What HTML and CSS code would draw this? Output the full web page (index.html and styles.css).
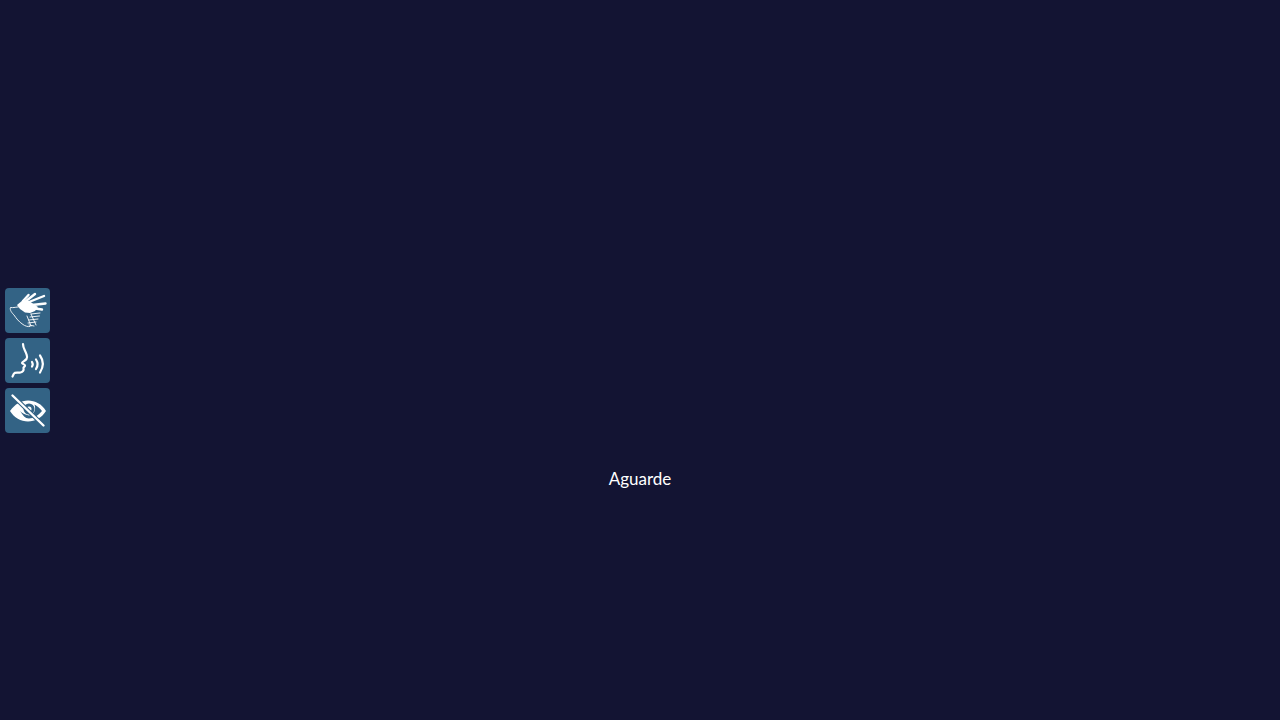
FILE: index.html
```html
<!DOCTYPE html>
<html lang="pt">
<head>
<meta charset="utf-8">
<title>Aguarde</title>
<link rel="stylesheet" href="styles.css">
</head>
<body>
<nav class="tools">
  <button class="tool" aria-label="Libras">
    <svg viewBox="0 0 45 45" class="icon">
      <path class="fill" d="M12 17 L18 12 L24 13 L33 19 L30 23 L25 25 L20 24.500 L15 21 Z"/>
      <path class="finger" d="M18 13 L23.500 7"/>
      <path class="finger" d="M21 13 L30 6"/>
      <path class="finger" d="M24 14 L39 8"/>
      <path class="finger" d="M27 17 L40.500 15.500"/>
      <path class="finger" d="M27 20 L37 21.500"/>
      <path class="thin" d="M16 18.500 C12 19 8 20 5.500 19.500 C4.500 22 7 25 9 27 C11 30 14 34 18 36.500 C20 38 23 39 25 38.500"/>
      <path class="thin" d="M26 26 L35 25 M25 29 L34.500 28 M24 32 L33 31 M23 35 L31 34 M24 37 L29 38 M22 28 L26 38 M26 26 L31 37"/>
    </svg>
  </button>
  <button class="tool" aria-label="Audio">
    <svg viewBox="0 0 45 45" class="icon">
      <path class="line" d="M18 6 C18 10 20 12 21 15 C22 18 23 19 21.500 21 C20 23 17.500 23.500 17 25 C17 26 20 26 20 27.500 C20 29 18 29 18.500 30.500 C19 32 18 34 15.500 34.500 C13 35 10 34 9 35.500 L7.500 38.500"/>
      <path class="line" d="M27 24 C28 25.500 28 27 27 28.500"/>
      <path class="line" d="M31 21.500 C33 24.500 33 28 31 31"/>
      <path class="line" d="M35 17.500 C38.500 22.500 38.500 29 35 34.500"/>
    </svg>
  </button>
  <button class="tool" aria-label="Contraste">
    <svg viewBox="0 0 45 45" class="icon">
      <path class="fill" fill-rule="evenodd" d="M5 23 C10 16 16 12.500 23 12.500 C30 12.500 37 16 41 23 C37 29.500 30 33.500 23 33.500 C16 33.500 9 29.500 5 23 Z M15 23 C18 27.500 20 30.500 24 30.500 C28.500 30.500 33.500 27.500 37 23 C35 20 32 18 29.500 16.500 C31 21 30 26 24 27.500 C20 27 17 25 15 23 Z"/>
      <circle class="hole" cx="24" cy="21" r="5.500"/>
      <circle class="fill" cx="24" cy="21" r="2.500"/>
      <path class="halo" d="M7.500 7.500 L38.500 37.500"/>
      <path class="slash" d="M7.500 7.500 L38.500 37.500"/>
    </svg>
  </button>
</nav>
<main class="status">
  <p class="message">Aguarde</p>
</main>
</body>
</html>
```

FILE: styles.css
```css
* {
  box-sizing: border-box;
}

html,
body {
  height: 100%;
  margin: 0;
}

body {
  background: #131433;
  color: #ffffff;
  font-family: "Lato", "Noto Sans", sans-serif;
  overflow: hidden;
}

.tools {
  position: fixed;
  left: 5px;
  top: 288px;
  display: flex;
  flex-direction: column;
  gap: 5px;
}

.tool {
  width: 45px;
  height: 45px;
  padding: 0;
  border: 0;
  border-radius: 4px;
  background: #336385;
  display: block;
}

.icon {
  display: block;
  width: 45px;
  height: 45px;
}

.fill {
  fill: #ffffff;
}

.hole {
  fill: #336385;
}

.thin,
.line,
.slash,
.finger,
.halo {
  fill: none;
  stroke: #ffffff;
  stroke-linecap: round;
  stroke-linejoin: round;
}

.thin {
  stroke-width: 0.9;
}

.finger {
  stroke-width: 2.4;
}

.line {
  stroke-width: 2.2;
}

.halo {
  stroke: #336385;
  stroke-width: 4.5;
}

.slash {
  stroke-width: 2.4;
}

.status {
  height: 100%;
  display: flex;
  justify-content: center;
  padding-top: 468px;
}

.message {
  margin: 0;
  font-size: 17px;
  line-height: 22px;
}
```
